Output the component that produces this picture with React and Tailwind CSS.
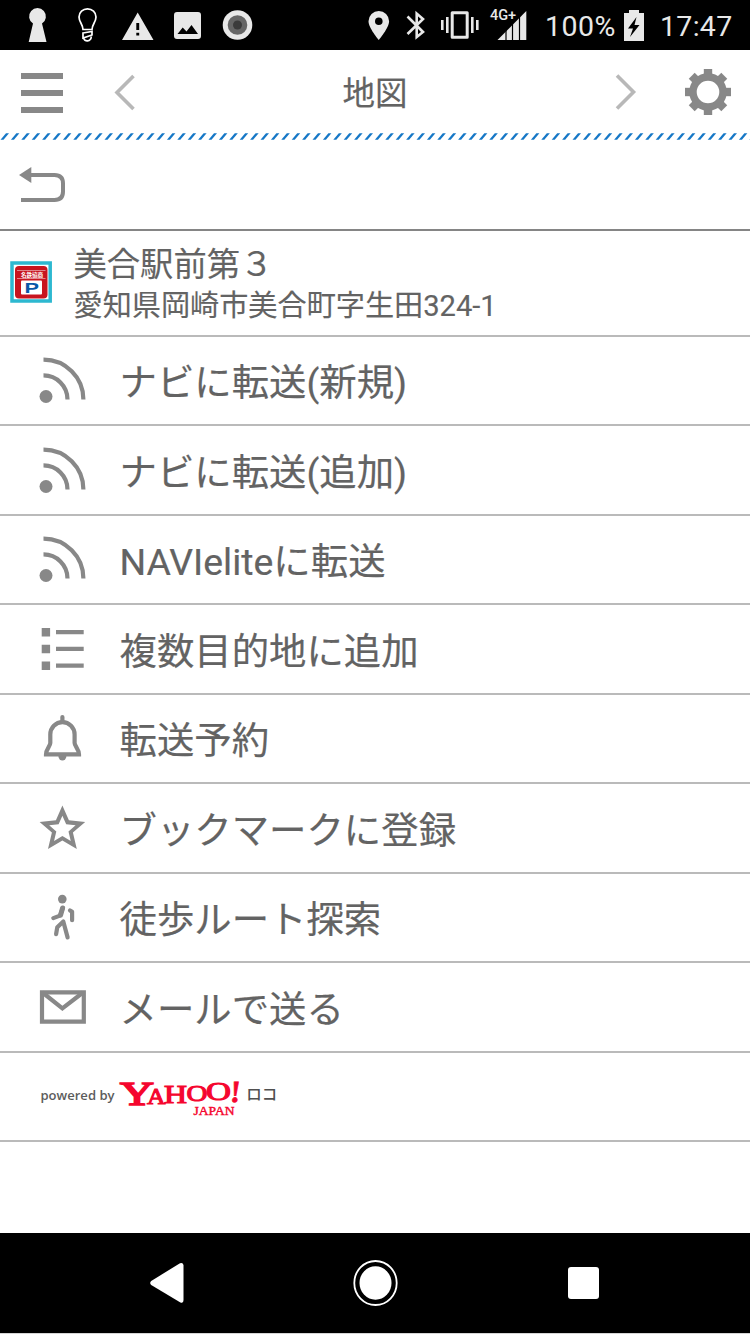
import React from "react";

const star = [
  [24.4, 2.5], [30.9, 17.3], [47.2, 19.1], [34.9, 29.6], [38.8, 46],
  [24.4, 37.6], [10, 46], [13.9, 29.6], [1.6, 19.1], [17.9, 17.3],
];
const starPath = (k) =>
  "M" + star.map(([x, y]) => `${24.4 + (x - 24.4) * k} ${26.8 + (y - 26.8) * k}`).join("L") + "Z";

function Icon({ children }) {
  return (
    <svg viewBox="0 0 50 50" className="h-[50px] w-[50px] shrink-0 text-[#888888]" fill="none" stroke="currentColor" strokeWidth="4.2">
      {children}
    </svg>
  );
}

const Rss = () => (
  <Icon>
    <circle cx="8" cy="41.5" r="6.5" fill="currentColor" stroke="none" />
    <path d="M5.5 20.4A24 24 0 0 1 29.5 44.4M5.5 4.6A39.8 39.8 0 0 1 45.4 44.4" />
  </Icon>
);
const List = () => (
  <Icon>
    <path stroke="none" fill="currentColor" d="M3.7 4.1h8.4v8.4h-8.4zM3.7 20.8h8.4v8.4h-8.4zM3.7 37.6h8.4v8.4h-8.4zM18 6h27.7v4.3H18zM18 22.7h27.7V27H18zM18 39.5h27.7v4.3H18z" />
  </Icon>
);
const Bell = () => (
  <Icon>
    <path d="M8 41.4C8 36 12.3 33 12.3 30V21.5A12.15 12.3 0 0 1 36.6 21.5V30C36.6 33 41 36 41 41.4Z" />
    <path d="M24.4 4V9" strokeLinecap="round" />
    <path d="M20.4 43a4 4.5 0 0 0 8 0z" fill="currentColor" stroke="none" />
  </Icon>
);
const Star = () => (
  <Icon>
    <path d={starPath(1) + starPath(0.58)} fill="currentColor" fillRule="evenodd" stroke="none" />
  </Icon>
);
const Walk = () => (
  <Icon>
    <circle cx="24.3" cy="6.1" r="4.3" fill="currentColor" stroke="none" />
    <path strokeLinecap="round" strokeLinejoin="round" d="M24.7 15.2L22 22.6L15.3 25.1M32 17.4L34.1 18.8V27.2M18.1 41.2L19.3 34.2L25.3 28.5L29.6 44.4" />
    <path d="M24.6 15L22.6 22" strokeWidth="5" strokeLinecap="round" />
  </Icon>
);
const Mail = () => (
  <Icon>
    <path d="M4 10.3H45.8V39.6H4Z" />
    <path d="M4.5 10.5L24.4 26.4L45 10.5" />
  </Icon>
);

const rows = [
  [Rss, "ナビに転送(新規)"],
  [Rss, "ナビに転送(追加)"],
  [Rss, "NAVIeliteに転送"],
  [List, "複数目的地に追加"],
  [Bell, "転送予約"],
  [Star, "ブックマークに登録"],
  [Walk, "徒歩ルート探索"],
  [Mail, "メールで送る"],
];

function StatusBar() {
  return (
    <div className="flex h-[50px] shrink-0 items-center bg-black text-[28.5px] leading-none text-[#e8e8e8]">
      <svg viewBox="0 0 260 50" className="h-[50px] w-[260px]" fill="#e8e8e8">
        <path d="M33 23.5A8.4 8.4 0 1 1 42 23.5L46.5 42H28.7Z" />
        <g fill="none" stroke="#fff" strokeWidth="1.7">
          <path d="M83 29.5C83 24.5 79 22 79 17A8.5 8.2 0 0 1 96 17C96 22 92 24.5 92 29.5ZM83 33L92 31.5V35L83 38ZM83.8 38C84 42 91 42 91.3 36.5" />
        </g>
        <path fillRule="evenodd" d="M137.7 12.5L153.5 40H122ZM136.3 23V30H139.2V23ZM136.3 32.7V35.5H139.2V32.7Z" />
        <path fillRule="evenodd" d="M177 12H198Q201 12 201 15V36Q201 39 198 39H177Q174 39 174 36V15Q174 12 177 12ZM177.5 34H198L191.5 25L186.5 31.5L182.7 27.5Z" />
        <circle cx="237.5" cy="25" r="14.8" />
        <circle cx="237.5" cy="25" r="9.8" fill="#666" />
        <circle cx="237.5" cy="25" r="4.5" fill="#3b3b3b" />
      </svg>
      <svg viewBox="360 0 185 50" className="ml-[100px] h-[50px] w-[185px] shrink-0" fill="#e8e8e8">
        <path fillRule="evenodd" d="M378.8 11A10.3 10.3 0 0 1 389.1 21.3C389.1 28 378.8 40 378.8 40S368.5 28 368.5 21.3A10.3 10.3 0 0 1 378.8 11ZM378.8 17.4A3.8 3.8 0 1 0 378.8 25A3.8 3.8 0 1 0 378.8 17.4Z" />
        <path fill="none" stroke="#e8e8e8" strokeWidth="2.6" d="M407.5 16.5L423 32L416.7 37V13.5L423 19L407.5 34" />
        <path fill="none" stroke="#e8e8e8" strokeWidth="3" strokeLinejoin="round" d="M452.2 12.8H467.2V37.2H452.2Z" />
        <path d="M441 20h2.6v10h-2.6zM446 17h2.6v16h-2.6zM471 17h2.6v16h-2.6zM476 20h2.6v10h-2.6z" />
        <path d="M526.3 11V40H497.5Z" />
        <path stroke="#000" strokeWidth="1.2" d="M506 28V41M512.5 21V41M519.5 14V41" />
        <text x="490" y="19.8" fontFamily="Roboto, sans-serif" fontSize="14.5" fontWeight="500" textLength="26">4G+</text>
      </svg>
      <span className="w-[72px] pt-[4px] tracking-[0.5px]">100%</span>
      <svg viewBox="0 0 20 32" className="ml-[7px] h-[32px] w-[20px] shrink-0" fill="#e8e8e8">
        <path fillRule="evenodd" d="M5 1H15V4H20V32H0V4H5ZM12.5 8L4 19.5H9L6 28L15.5 16H10.5Z" />
      </svg>
      <span className="ml-[16px] pt-[4px] tracking-[0.3px]">17:47</span>
    </div>
  );
}

function Header() {
  const teeth = [0, 45, 90, 135, 180, 225, 270, 315];
  return (
    <header className="flex h-[83px] shrink-0 items-center justify-between bg-white pr-[18px] pl-[21px]">
      <div className="flex items-center gap-[50px]">
        <div className="flex w-[42px] flex-col gap-[10.3px] pt-[3px]">
          <div className="h-[6.5px] bg-[#888888]" />
          <div className="h-[6.5px] bg-[#888888]" />
          <div className="h-[6.5px] bg-[#888888]" />
        </div>
        <svg viewBox="0 0 24 40" className="h-[40px] w-[24px]" fill="none" stroke="#b8b8b8" strokeWidth="3.6">
          <path d="M20.5 4L4 20.5L20.5 37" />
        </svg>
      </div>
      <h1 className="pt-[5px] text-[32.5px] leading-none text-[#636363] [-webkit-text-stroke:0.2px_#636363]">地図</h1>
      <div className="flex items-center gap-[47px]">
        <svg viewBox="0 0 24 40" className="h-[40px] w-[24px]" fill="none" stroke="#b8b8b8" strokeWidth="3.6">
          <path d="M4 3.5L20.5 20L4 36.5" />
        </svg>
        <svg viewBox="-24 -24 48 48" className="h-[48px] w-[48px]">
          {teeth.map((a) => (
            <path key={a} d="M-4.2 -23H4.2V-12H-4.2Z" transform={`rotate(${a})`} fill="#888888" />
          ))}
          <circle r="15" fill="none" stroke="#888888" strokeWidth="7.4" />
        </svg>
      </div>
    </header>
  );
}

function YahooLogo() {
  return (
    <svg viewBox="38 0 240 88" className="h-[88px] w-[240px]" fontFamily="'Liberation Serif', serif">
      <text x="40.5" y="47" fontFamily="'Open Sans', sans-serif" fontSize="13" fontWeight="600" fill="#5c5c5c" textLength="74" lengthAdjust="spacingAndGlyphs">powered by</text>
      <g fill="#f5062e" stroke="#f5062e">
        <text x="120" y="52.3" fontSize="34.5" strokeWidth="1.7" textLength="34" lengthAdjust="spacingAndGlyphs">Y</text>
        <text x="147" y="51.3" fontSize="24" strokeWidth="1.1" textLength="18.5" lengthAdjust="spacingAndGlyphs">A</text>
        <text x="164" y="49.6" fontSize="24.5" strokeWidth="1.1" textLength="23" lengthAdjust="spacingAndGlyphs">H</text>
        <text x="186.5" y="48.3" fontSize="22.5" strokeWidth="1" textLength="21" lengthAdjust="spacingAndGlyphs">O</text>
        <text x="206" y="47.3" fontSize="26" strokeWidth="1.1" textLength="25" lengthAdjust="spacingAndGlyphs">O</text>
        <text x="0" y="0" fontSize="31" fontWeight="700" strokeWidth="0.6" transform="translate(229.5 49.3) skewX(-5)">!</text>
        <text x="193.5" y="61.5" fontSize="12.5" strokeWidth="0.4" textLength="41" lengthAdjust="spacingAndGlyphs">JAPAN</text>
      </g>
      <text x="246.3" y="47.3" fontFamily="'Noto Sans CJK JP', sans-serif" fontSize="15.5" fontWeight="500" fill="#505050" textLength="31">ロコ</text>
    </svg>
  );
}

export default function App() {
  return (
    <div className="flex h-[1334px] w-[750px] flex-col overflow-hidden bg-white font-['Roboto','Noto_Sans_CJK_JP',sans-serif] text-[#636363]">
      <StatusBar />
      <Header />
      <svg viewBox="0 0 750 7" className="h-[7px] w-[750px] shrink-0" fill="#1577c6">
        {Array.from({ length: 73 }, (_, i) => (
          <path key={i} d="M0.5 6.8L6 0.3H9L3.5 6.8Z" transform={`translate(${i * 10.4} 0)`} />
        ))}
      </svg>
      <div className="flex h-[91px] shrink-0 items-center border-b-2 border-[#858585] pl-[18px]">
        <svg viewBox="0 0 50 40" className="h-[40px] w-[50px]" fill="none" stroke="#888888" strokeWidth="4">
          <path d="M12 10H36.5Q45 10 45 18.5V26.5Q45 35 36.5 35H3" />
          <path d="M1 10L13.3 2V18Z" fill="#888888" stroke="none" />
        </svg>
      </div>
      <div className="flex h-[105.5px] shrink-0 items-center border-b-2 border-[#bababa] pl-[10px]">
        <svg viewBox="0 0 42 42" className="-mt-[2px] h-[42px] w-[42px] shrink-0">
          <path d="M2 2H40.2V40H2Z" fill="#fff" stroke="#2db8d0" strokeWidth="3.5" />
          <rect x="5" y="5" width="32.5" height="32.5" rx="4" fill="#c8141e" />
          <path d="M7 9.5H35.5M7 17.5H35.5" stroke="#e9a0a4" strokeWidth="0.8" />
          <text x="11" y="15.8" fontSize="5.6" fontWeight="700" fill="#fff" textLength="22">名鉄協商</text>
          <rect x="11" y="19.5" width="21" height="14" rx="1" fill="#fff" />
          <text x="14.5" y="31.5" fontFamily="'Liberation Sans', sans-serif" fontSize="14.5" fontWeight="700" fill="#0858a8" textLength="14.5" lengthAdjust="spacingAndGlyphs">P</text>
        </svg>
        <div className="flex flex-col pt-[5px] pl-[21.5px] [-webkit-text-stroke:0.15px_#636363]">
          <div className="h-[42.5px] text-[33.3px] leading-[43px]">美合駅前第３</div>
          <div className="h-[43px] text-[29.15px] leading-[43px]">愛知県岡崎市美合町字生田324-1</div>
        </div>
      </div>
      {rows.map(([RowIcon, label]) => (
        <div key={label} className="flex h-[89.55px] shrink-0 items-center border-b-2 border-[#bababa] pl-[38px]">
          <RowIcon />
          <span className="pt-[7px] pl-[31.5px] text-[37.4px] leading-none [-webkit-text-stroke:0.2px_#636363]">{label}</span>
        </div>
      ))}
      <div className="flex h-[89.55px] shrink-0 items-center border-b-2 border-[#bababa] pl-[38px]">
        <YahooLogo />
      </div>
      <div className="mt-auto flex h-[101px] shrink-0 items-center justify-center border-b border-[#d5d5d5] bg-black pr-[2px]">
        <svg viewBox="0 0 34 42" className="h-[42px] w-[34px]" fill="#fff">
          <path d="M1.2 19L30 1.2Q33.5 0 33.5 3.5V38Q33.5 42 30 40.2L1.2 23Q-.8 21 1.2 19Z" />
        </svg>
        <svg viewBox="0 0 46 48" className="mx-[169px] h-[48px] w-[46px]" fill="#fff">
          <ellipse cx="22.5" cy="24" rx="21.2" ry="22" fill="none" stroke="#fff" strokeWidth="1.8" />
          <ellipse cx="22.5" cy="24" rx="16" ry="16.7" />
        </svg>
        <div className="h-[32px] w-[31px] rounded-[3px] bg-white" />
      </div>
    </div>
  );
}
